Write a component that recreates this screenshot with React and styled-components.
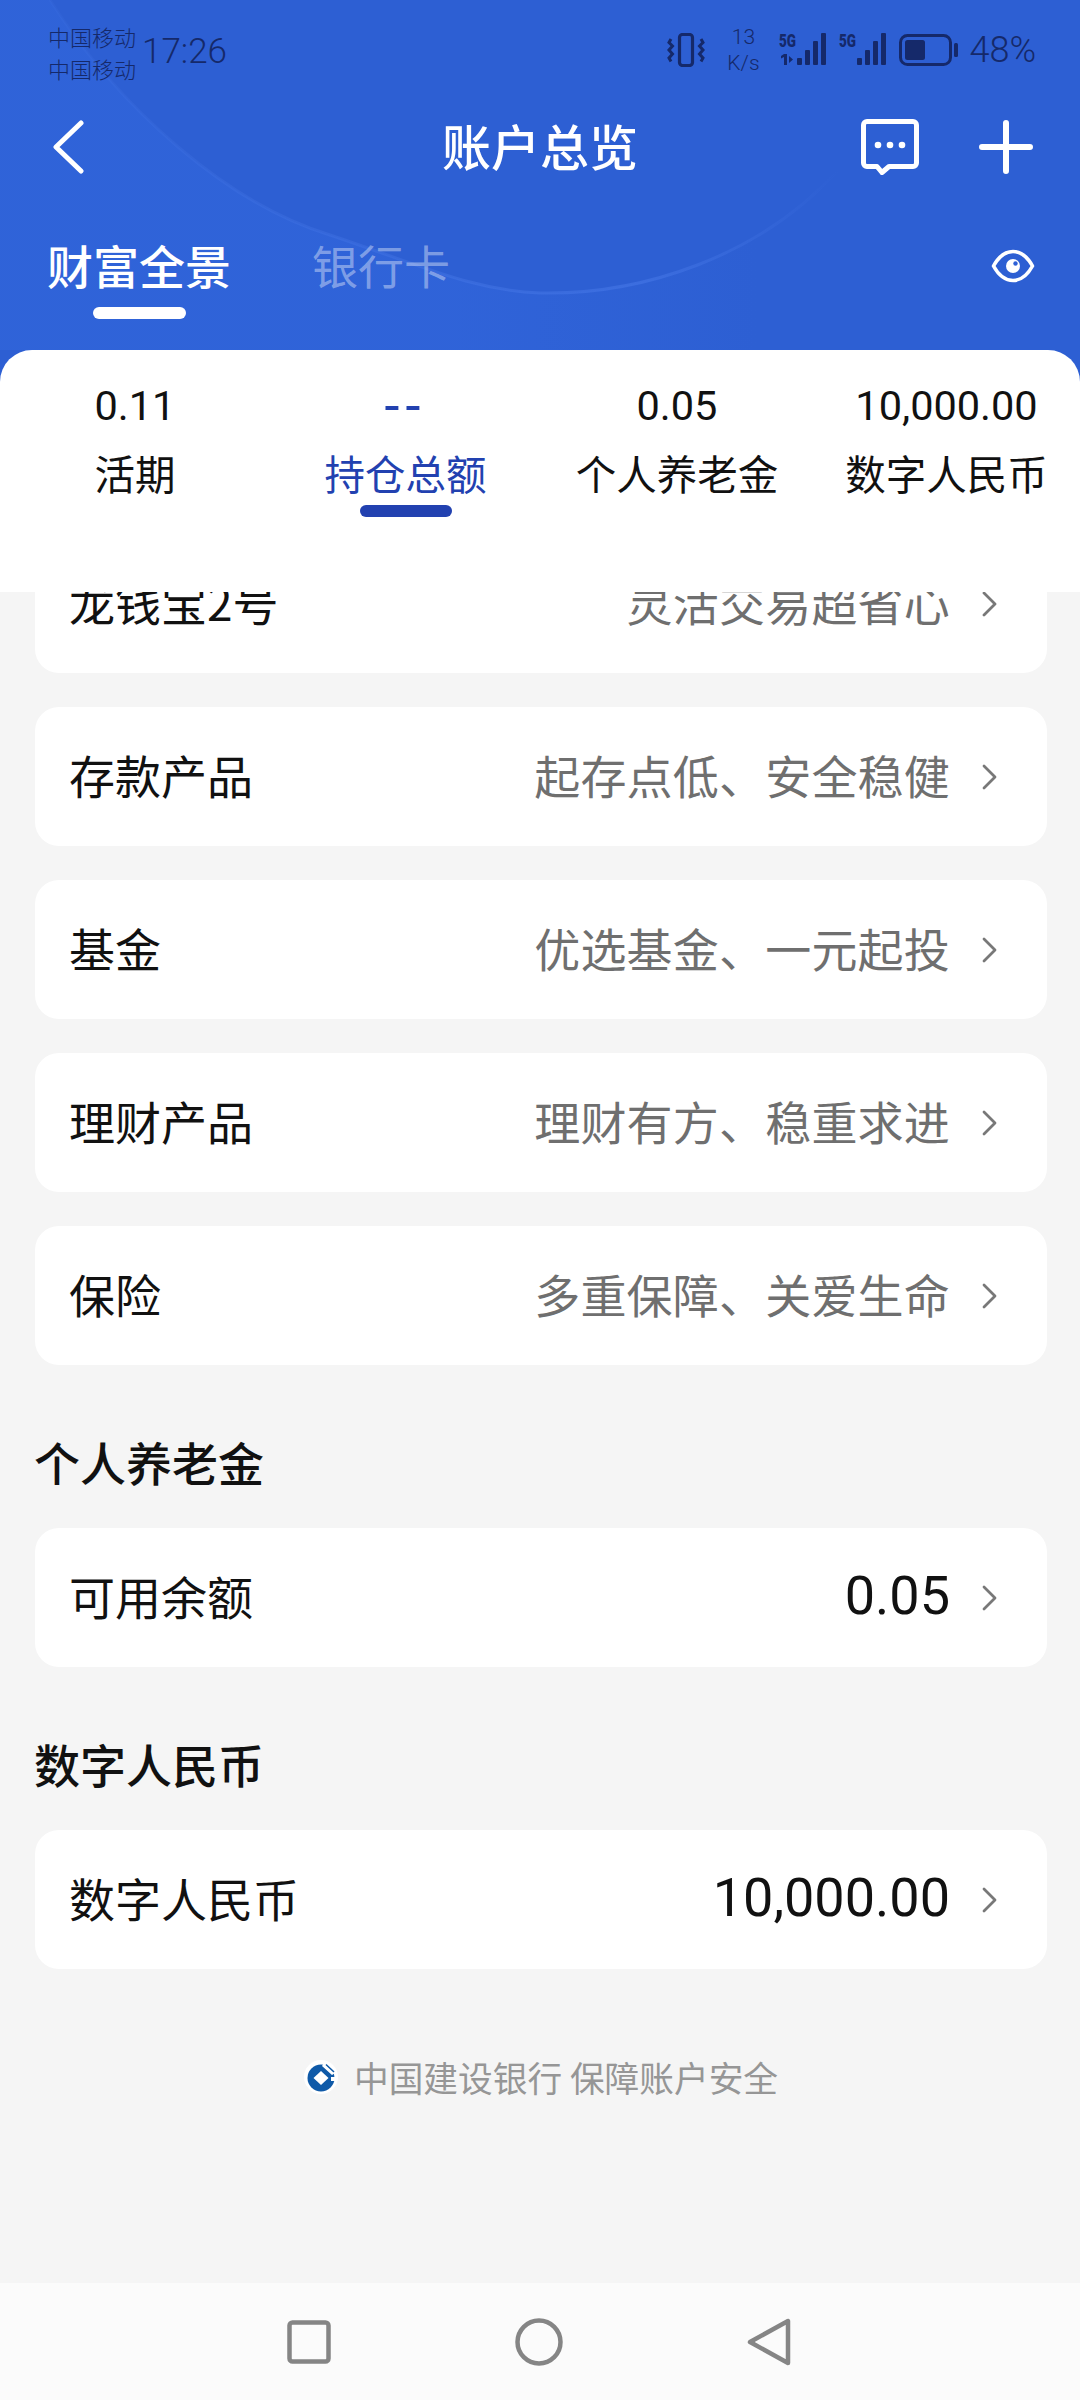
import React from 'react';
import styled, { createGlobalStyle } from 'styled-components';

const cjk = `'Noto Sans CJK SC', 'Noto Sans', sans-serif`;
const num = `Roboto, 'Noto Sans CJK SC', sans-serif`;

const GlobalStyle = createGlobalStyle`
  html, body { margin: 0; padding: 0; background: #f5f5f5; }
  * { box-sizing: border-box; }
`;

const summary = [
  { value: '0.11', label: '活期' },
  { value: '--', label: '持仓总额', active: true },
  { value: '0.05', label: '个人养老金' },
  { value: '10,000.00', label: '数字人民币' },
];

const products = [
  { name: '存款产品', desc: '起存点低、安全稳健' },
  { name: '基金', desc: '优选基金、一元起投' },
  { name: '理财产品', desc: '理财有方、稳重求进' },
  { name: '保险', desc: '多重保障、关爱生命' },
];

function Chevron() {
  return (
    <ChevronIcon viewBox="0 0 16 26" fill="none">
      <path d="M2 2l11 11L2 24" stroke="#787878" strokeWidth="2.8" strokeLinecap="round" strokeLinejoin="round" />
    </ChevronIcon>
  );
}

function SignalBars({ roaming }) {
  return (
    <SignalIcon viewBox="0 0 50 36" fill="#15296a">
      <text x="0" y="15" fontFamily="Roboto, sans-serif" fontWeight="900" fontSize="19" textLength="17" lengthAdjust="spacingAndGlyphs">5G</text>
      {roaming && <path d="M2 24l3-2h3v11H5v-8l-3 1.500zM10 24l4 3.500L10 31z" />}
      <rect x="18" y="26" width="5" height="7" rx="1" />
      <rect x="26" y="18" width="5" height="15" rx="1" />
      <rect x="34" y="9" width="5" height="24" rx="1" />
      <rect x="42" y="1" width="5" height="32" rx="1" />
    </SignalIcon>
  );
}

export default function App() {
  return (
    <Page>
      <GlobalStyle />
      <Header>
        <HeaderGlow viewBox="0 0 1080 350" fill="none">
          <defs>
            <linearGradient id="edge" x1="50" y1="0" x2="840" y2="0" gradientUnits="userSpaceOnUse">
              <stop offset="0" stopColor="#4a7bea" stopOpacity="0.1" />
              <stop offset="0.75" stopColor="#4a7bea" stopOpacity="0.5" />
              <stop offset="1" stopColor="#4a7bea" stopOpacity="0" />
            </linearGradient>
            <linearGradient id="wash" x1="0" y1="0" x2="760" y2="0" gradientUnits="userSpaceOnUse">
              <stop offset="0" stopColor="#3267de" stopOpacity="0.5" />
              <stop offset="0.6" stopColor="#3267de" stopOpacity="0.5" />
              <stop offset="1" stopColor="#3267de" stopOpacity="0" />
            </linearGradient>
          </defs>
          <path d="M50 0C120 110 230 205 330 235c90 30 140 55 210 58 100 2 220-35 300-125L840 350H0V0Z" fill="url(#wash)" />
          <path d="M50 0C120 110 230 205 330 235c90 30 140 55 210 58 100 2 220-35 300-125" stroke="url(#edge)" strokeWidth="3" />
        </HeaderGlow>
        <StatusBar>
          <StatusLeft>
            <Carriers>
              <span>中国移动</span>
              <span>中国移动</span>
            </Carriers>
            <Clock>17:26</Clock>
          </StatusLeft>
          <StatusRight>
            <svg width="38" height="34" viewBox="0 0 38 34" fill="none" stroke="#15296a">
              <rect x="12.500" y="1.500" width="13" height="31" rx="3" strokeWidth="3.200" />
              <path d="M4 6l-2 3.500L5.500 13 2 17l3.500 4L2 25l2 3.500M34 6l2 3.500-3.500 3.500 3.500 4-3.500 4 3.500 4-2 3.500" strokeWidth="3" />
            </svg>
            <NetSpeed>
              <span>13</span>
              <span>K/s</span>
            </NetSpeed>
            <SignalBars roaming />
            <SignalBars />
            <svg width="60" height="32" viewBox="0 0 60 32" fill="none">
              <rect x="1.500" y="1.500" width="50" height="29" rx="7" stroke="#15296a" strokeWidth="3" />
              <rect x="6" y="6" width="20" height="20" rx="2.500" fill="#15296a" />
              <rect x="55" y="9" width="4" height="14" rx="1.500" fill="#15296a" />
            </svg>
            <Battery>48%</Battery>
          </StatusRight>
        </StatusBar>

        <NavRow>
          <svg width="32" height="54" viewBox="0 0 32 54" fill="none">
            <path d="M29 3L4 27l25 24" stroke="#fff" strokeWidth="5" strokeLinecap="round" strokeLinejoin="round" />
          </svg>
          <Title>账户总览</Title>
          <NavActions>
            <svg width="58" height="56" viewBox="0 0 58 56" fill="none">
              <path d="M6 2.500h46a3.500 3.500 0 0 1 3.500 3.500v38a3.500 3.500 0 0 1-3.500 3.500H28l-7 6-5-6H6A3.500 3.500 0 0 1 2.500 44V6A3.500 3.500 0 0 1 6 2.500z" stroke="#fff" strokeWidth="5" strokeLinejoin="round" />
              <circle cx="17" cy="26" r="3.300" fill="#fff" />
              <circle cx="29" cy="26" r="3.300" fill="#fff" />
              <circle cx="41" cy="26" r="3.300" fill="#fff" />
            </svg>
            <svg width="54" height="54" viewBox="0 0 54 54" fill="none">
              <path d="M27 3v48M3 27h48" stroke="#fff" strokeWidth="6" strokeLinecap="round" />
            </svg>
          </NavActions>
        </NavRow>

        <TabRow>
          <Tab $active>
            财富全景
            <TabMark />
          </Tab>
          <Tab>银行卡</Tab>
          <EyeIcon viewBox="0 0 44 34" fill="none">
            <path d="M2.500 17C8 7 15 2.500 22 2.500S36 7 41.500 17C36 27 29 31.500 22 31.500S8 27 2.500 17z" stroke="#fff" strokeWidth="3.600" strokeLinejoin="round" />
            <circle cx="22" cy="17" r="7" fill="#fff" />
            <circle cx="24.500" cy="14.500" r="2.200" fill="#2d60d6" />
          </EyeIcon>
        </TabRow>
      </Header>

      <SummaryPanel>
        {summary.map((s) => (
          <SummaryCol key={s.label} $active={s.active}>
            <SummaryValue $active={s.active}>{s.value}</SummaryValue>
            <SummaryLabel>{s.label}</SummaryLabel>
            {s.active && <SummaryMark />}
          </SummaryCol>
        ))}
      </SummaryPanel>

      <Scroll>
        <ClippedCard>
          <CardName>龙钱宝2号</CardName>
          <CardRight>
            <CardDesc>灵活交易超省心</CardDesc>
            <Chevron />
          </CardRight>
        </ClippedCard>
        <CardList>
          {products.map((p) => (
            <Card key={p.name}>
              <CardName>{p.name}</CardName>
              <CardRight>
                <CardDesc>{p.desc}</CardDesc>
                <Chevron />
              </CardRight>
            </Card>
          ))}
        </CardList>

        <SectionTitle>个人养老金</SectionTitle>
        <Card>
          <CardName>可用余额</CardName>
          <CardRight>
            <CardAmount>0.05</CardAmount>
            <Chevron />
          </CardRight>
        </Card>

        <SectionTitle>数字人民币</SectionTitle>
        <Card>
          <CardName>数字人民币</CardName>
          <CardRight>
            <CardAmount>10,000.00</CardAmount>
            <Chevron />
          </CardRight>
        </Card>

        <Footer>
          <svg width="34" height="34" viewBox="0 0 34 34">
            <circle cx="17" cy="17" r="17" fill="#fff" />
            <circle cx="17" cy="18" r="13.500" fill="#0f5aa8" />
            <path d="M17 11l7.500 7-7.500 7-7.500-7z" fill="#fff" />
            <path d="M20 3l11 10-3 2L18 6zM27 17h5v4h-5z" fill="#fff" />
            <path d="M22 4.500l8 7.500" stroke="#0f5aa8" strokeWidth="1.500" />
          </svg>
          <span>中国建设银行 保障账户安全</span>
        </Footer>
      </Scroll>

      <BottomNav>
        <svg width="44" height="44" viewBox="0 0 44 44" fill="none">
          <rect x="2.500" y="2.500" width="39" height="39" rx="3" stroke="#858585" strokeWidth="4.500" />
        </svg>
        <svg width="48" height="48" viewBox="0 0 48 48" fill="none">
          <circle cx="24" cy="24" r="21.500" stroke="#858585" strokeWidth="4.500" />
        </svg>
        <svg width="44" height="48" viewBox="0 0 44 48" fill="none">
          <path d="M41 3v42L3 24z" stroke="#858585" strokeWidth="4.500" strokeLinejoin="round" />
        </svg>
      </BottomNav>
    </Page>
  );
}

const Page = styled.div`
  width: 1080px;
  height: 2400px;
  display: flex;
  flex-direction: column;
  overflow: hidden;
  background: #f5f5f5;
  font-family: ${cjk};
`;

const Header = styled.header`
  position: relative;
  flex: none;
  height: 382px;
  margin-bottom: -32px;
  background: #2d5fd3;
`;

const HeaderGlow = styled.svg`
  position: absolute;
  inset: 0;
  width: 1080px;
  height: 350px;
`;

const StatusBar = styled.div`
  position: relative;
  height: 98px;
  padding: 20px 44px 0 48px;
  display: flex;
  justify-content: space-between;
  color: #15296a;
`;

const StatusLeft = styled.div`
  display: flex;
  gap: 6px;
`;

const Carriers = styled.div`
  display: flex;
  flex-direction: column;
  font-size: 22px;
  line-height: 32px;
  font-weight: 300;
`;

const Clock = styled.span`
  font-family: ${num};
  font-weight: 300;
  font-size: 35px;
  line-height: 64px;
`;

const StatusRight = styled.div`
  display: flex;
  align-items: center;
  height: 60px;
  gap: 10px;
`;

const SignalIcon = styled.svg`
  width: 50px;
  height: 36px;
  overflow: visible;
`;

const NetSpeed = styled.div`
  display: flex;
  flex-direction: column;
  align-items: center;
  width: 40px;
  margin: 0 6px 0 8px;
  font-family: ${num};
  font-weight: 300;
  font-size: 21px;
  line-height: 26px;
`;

const Battery = styled.span`
  font-family: ${num};
  font-weight: 300;
  font-size: 36px;
`;

const NavRow = styled.div`
  position: relative;
  height: 98px;
  padding: 0 47px 0 52px;
  display: flex;
  align-items: center;
  justify-content: space-between;
`;

const Title = styled.h1`
  position: absolute;
  left: 0;
  right: 0;
  margin: 0 0 6px;
  text-align: center;
  font-size: 49px;
  font-weight: 500;
  color: #fff;
`;

const NavActions = styled.div`
  display: flex;
  align-items: center;
  gap: 60px;
`;

const TabRow = styled.div`
  position: relative;
  padding: 33px 45px 0 47px;
  display: flex;
  align-items: flex-start;
  gap: 81px;
`;

const Tab = styled.div`
  position: relative;
  font-size: 46px;
  line-height: 70px;
  font-weight: ${(p) => (p.$active ? 500 : 400)};
  color: ${(p) => (p.$active ? '#fff' : 'rgba(255, 255, 255, 0.4)')};
`;

const TabMark = styled.div`
  width: 93px;
  height: 12px;
  margin: 8px auto 0;
  border-radius: 6px;
  background: #fff;
`;

const EyeIcon = styled.svg`
  width: 44px;
  height: 34px;
  margin: 20px 0 0 auto;
`;

const SummaryPanel = styled.section`
  position: relative;
  flex: none;
  height: 242px;
  display: grid;
  grid-template-columns: 270px 271px 272px 267px;
  background: #fff;
  border-radius: 32px 32px 0 0;
`;

const SummaryCol = styled.div`
  display: flex;
  flex-direction: column;
  align-items: center;
  padding-top: 30px;
  color: ${(p) => (p.$active ? '#2241b0' : '#111')};
`;

const SummaryValue = styled.div`
  font-family: ${num};
  font-size: ${(p) => (p.$active ? '54px' : '41.5px')};
  letter-spacing: ${(p) => (p.$active ? '6px' : '0')};
  line-height: 52px;
`;

const SummaryLabel = styled.div`
  margin-top: 13px;
  font-size: 40.5px;
  line-height: 56px;
  white-space: nowrap;
`;

const SummaryMark = styled.div`
  width: 92px;
  height: 12px;
  margin-top: 4px;
  border-radius: 6px;
  background: #2241b0;
`;

const Scroll = styled.main`
  flex: 1;
  min-height: 0;
  padding: 0 33px 0 35px;
  overflow: hidden;
`;

const CardList = styled.div`
  display: flex;
  flex-direction: column;
  gap: 34px;
  margin-top: 34px;
`;

const Card = styled.div`
  height: 139px;
  padding: 0 49px 0 34px;
  display: flex;
  align-items: center;
  justify-content: space-between;
  border-radius: 24px;
  background: #fff;
`;

// scrolled up behind the summary panel, so its top part is cut off
const ClippedCard = styled(Card)`
  margin-top: -58px;
`;

const CardName = styled.div`
  padding-bottom: 6px;
  font-size: 46px;
  color: #111;
`;

const CardRight = styled.div`
  display: flex;
  align-items: center;
  gap: 32px;
`;

const CardDesc = styled.div`
  padding-bottom: 6px;
  font-size: 46px;
  letter-spacing: 0.2px;
  color: #6f6f6f;
`;

const CardAmount = styled.div`
  padding-bottom: 4px;
  font-family: ${num};
  font-size: 54px;
  color: #111;
`;

const ChevronIcon = styled.svg`
  width: 16px;
  height: 26px;
  flex: none;
`;

const SectionTitle = styled.h2`
  margin: 0 0 0 -1px;
  height: 163px;
  padding-top: 62px;
  font-size: 46px;
  line-height: 68px;
  font-weight: 500;
  color: #111;
`;

const Footer = styled.footer`
  display: flex;
  justify-content: center;
  align-items: center;
  gap: 16px;
  margin-top: 83px;
  font-size: 34.7px;
  color: #969696;
`;

const BottomNav = styled.nav`
  flex: none;
  height: 117px;
  padding: 0 289px 0 287px;
  display: flex;
  align-items: center;
  justify-content: space-between;
  background: #fbfbfb;
`;
